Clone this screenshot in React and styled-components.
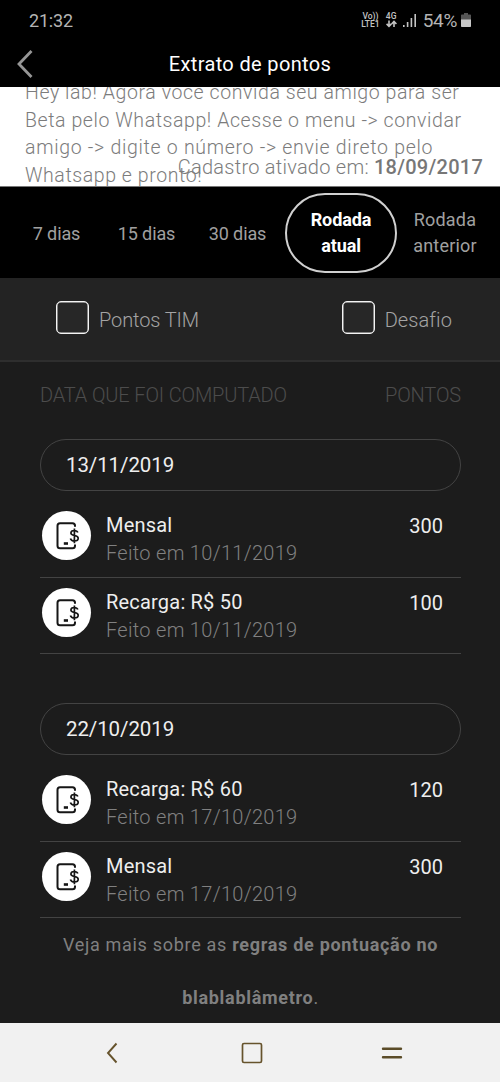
import React, { useState } from 'react'
import styled, { createGlobalStyle } from 'styled-components'

const periods = [
    { id: '7', lines: ['7 dias'], width: 85, spacing: -0.1 },
    { id: '15', lines: ['15 dias'], width: 95, spacing: -0.1 },
    { id: '30', lines: ['30 dias'], width: 87, spacing: -0.1 },
    { id: 'atual', lines: ['Rodada', 'atual'], width: 112, spacing: -0.1 },
    { id: 'anterior', lines: ['Rodada', 'anterior'], width: 96, spacing: 0.2 },
]

const groups = [
    {
        date: '13/11/2019',
        items: [
            { title: 'Mensal', done: '10/11/2019', points: 300 },
            { title: 'Recarga: R$ 50', done: '10/11/2019', points: 100 },
        ],
    },
    {
        date: '22/10/2019',
        items: [
            { title: 'Recarga: R$ 60', done: '17/10/2019', points: 120 },
            { title: 'Mensal', done: '17/10/2019', points: 300 },
        ],
    },
]

const notice = [
    'Hey lab! Agora você convida seu amigo para ser',
    'Beta pelo Whatsapp! Acesse o menu -> convidar',
    'amigo -> digite o número -> envie direto pelo',
    'Whatsapp e pronto!',
]

function StatusIcons() {
    return (
        <StatusRight>
            <TinyStack>
                <span>Vo))</span>
                <span>LTE1</span>
            </TinyStack>
            <TinyStack>
                <span>4G</span>
                <svg width="11" height="8" viewBox="0 0 11 8" fill="none" stroke="#c4c4c4" strokeWidth="1.6">
                    <path d="M3 .5v5.6M.6 3.900L3 6.400l2.400-2.500M8 7V1.700M5.600 4L8 1.500l2.400 2.500" />
                </svg>
            </TinyStack>
            <svg width="14" height="15" viewBox="0 0 14 15" fill="#c4c4c4">
                <rect x="0" y="12" width="1.6" height="2" />
                <rect x="3.8" y="9" width="1.6" height="5" />
                <rect x="7.6" y="5" width="1.6" height="9" />
                <rect x="11.4" y="1" width="1.6" height="13" />
            </svg>
            <Battery>54%</Battery>
            <svg width="10" height="16" viewBox="0 0 10 16">
                <path d="M3 1h4v1.500h2.200a.8.8 0 0 1 .8.800V8H0V3.300a.8.8 0 0 1 .8-.8H3z" fill="#555" />
                <path d="M0 7.500h10v6.700a.8.8 0 0 1-.8.800H.8a.8.8 0 0 1-.8-.8z" fill="#c8c8c8" />
            </svg>
        </StatusRight>
    )
}

function PhoneMoneyIcon() {
    return (
        <svg width="49" height="49" viewBox="0 0 49 49" fill="none" stroke="#161616" strokeWidth="2">
            <path d="M33 15.800v-1a2.500 2.500 0 0 0-2.500-2.500h-12.500a2.500 2.500 0 0 0-2.500 2.500v20a2.500 2.500 0 0 0 2.500 2.500h12.500a2.500 2.500 0 0 0 2.500-2.500V33.500" />
            <path d="M21.800 32.500h4.200" strokeWidth="2.600" />
            <path d="M35.800 21.600c-.5-1.500-1.700-2.100-3.500-2.100-2 0-3.400.9-3.400 2.500 0 3.600 7.300 1.400 7.300 5.200 0 1.700-1.600 2.700-3.800 2.700-2.100 0-3.500-.8-4-2.500M32.400 17.400v14.800" strokeWidth="1.700" />
        </svg>
    )
}

function Entry({ item }) {
    return (
        <EntryRow>
            <Badge><PhoneMoneyIcon /></Badge>
            <EntryText>
                <EntryTitle>{item.title}</EntryTitle>
                <EntryDate>Feito em {item.done}</EntryDate>
            </EntryText>
            <Points>{item.points}</Points>
        </EntryRow>
    )
}

function App() {
    const [period, setPeriod] = useState('atual')

    return (
        <Screen>
            <GlobalStyle />
            <StatusBar>
                <Clock>21:32</Clock>
                <StatusIcons />
            </StatusBar>
            <Header>
                <svg width="17" height="28" viewBox="0 0 17 28" fill="none" stroke="#969696" strokeWidth="2.800">
                    <path d="M15.500 1L3 14l12.500 13" />
                </svg>
                <Title>Extrato de pontos</Title>
            </Header>
            <Notice>
                {notice.map((line) => <NoticeLine key={line}>{line}</NoticeLine>)}
                <Activated>Cadastro ativado em: <b>18/09/2017</b></Activated>
            </Notice>
            <Tabs>
                {periods.map((p) => (
                    <Tab
                        key={p.id}
                        $width={p.width}
                        $spacing={p.spacing}
                        $active={p.id === period}
                        onClick={() => setPeriod(p.id)}
                    >
                        {p.lines.map((line) => <span key={line}>{line}</span>)}
                    </Tab>
                ))}
            </Tabs>
            <Filters>
                <Filter><Box /><span>Pontos TIM</span></Filter>
                <Filter><Box /><span>Desafio</span></Filter>
            </Filters>
            <Statement>
                <Columns>
                    <span>DATA QUE FOI COMPUTADO</span>
                    <span>PONTOS</span>
                </Columns>
                {groups.map((group) => (
                    <Group key={group.date}>
                        <DatePill>{group.date}</DatePill>
                        {group.items.map((item) => <Entry key={item.title} item={item} />)}
                    </Group>
                ))}
                <Rules>
                    <span>Veja mais sobre as <b>regras de pontuação no</b></span>
                    <span><b>blablablâmetro</b>.</span>
                </Rules>
            </Statement>
            <NavBar>
                <svg width="22" height="22" viewBox="0 0 22 22" fill="none" stroke="#66532c" strokeWidth="1.900">
                    <path d="M15.500 1.500L7 11l8.500 9.500" />
                </svg>
                <svg width="22" height="22" viewBox="0 0 22 22" fill="none" stroke="#66532c" strokeWidth="1.700">
                    <rect x="1.500" y="1.500" width="19" height="19" rx="1.500" />
                </svg>
                <svg width="22" height="22" viewBox="0 0 22 22" fill="none" stroke="#5b4c28" strokeWidth="2.400" strokeLinecap="round">
                    <path d="M2 6.800h18M2 15.300h18" />
                </svg>
            </NavBar>
        </Screen>
    )
}

export default App

const GlobalStyle = createGlobalStyle`
    body {
        margin: 0;
        background: #1c1c1c;
    }
    * {
        box-sizing: border-box;
    }
    svg {
        display: block;
        flex-shrink: 0;
    }
`

const Screen = styled.div`
    display: flex;
    flex-direction: column;
    width: 500px;
    height: 1082px;
    overflow: hidden;
    background: #1c1c1c;
    font-family: Roboto, "Liberation Sans", sans-serif;
    font-weight: 300;
    white-space: nowrap;
`

const StatusBar = styled.div`
    display: flex;
    justify-content: space-between;
    align-items: center;
    height: 40px;
    padding: 0 29px;
    background: #000;
    color: #b4b4b4;
`

const Clock = styled.span`
    font-size: 18px;
    font-weight: 400;
    letter-spacing: -0.2px;
`

const StatusRight = styled.div`
    display: flex;
    align-items: center;
`

const TinyStack = styled.div`
    display: flex;
    flex-direction: column;
    align-items: center;
    margin-right: 6px;
    font-size: 8.500px;
    font-weight: 500;
    line-height: 8px;
    color: #c4c4c4;
`

const Battery = styled.span`
    margin: 0 4px 0 6px;
    font-size: 19px;
    font-weight: 400;
    letter-spacing: -0.3px;
`

const Header = styled.header`
    display: flex;
    align-items: center;
    height: 47px;
    padding: 0 16px;
    background: #000;
`

const Title = styled.h1`
    flex: 1;
    margin: 0 17px 0 0;
    text-align: center;
    color: #fff;
    font-size: 20px;
    font-weight: 400;
    letter-spacing: 0.35px;
`

const Notice = styled.section`
    position: relative;
    height: 100px;
    padding: 0 25px;
    overflow: hidden;
    background: #fff;
    border-bottom: 1px solid #777;
    color: #7c7c7c;
`

const NoticeLine = styled.p`
    margin: 0;
    font-size: 19.500px;
    line-height: 27.700px;
    letter-spacing: 0.58px;

    &:first-child {
        margin-top: -8.200px;
    }

    &:nth-child(3) {
        letter-spacing: 0.7px;
    }
`

/* floats over the last line of the notice */
const Activated = styled.div`
    position: absolute;
    right: 17px;
    bottom: 5px;
    font-size: 20px;
    line-height: 28px;
    letter-spacing: 0.25px;

    b {
        font-weight: 500;
        color: #777;
    }
`

const Tabs = styled.nav`
    display: flex;
    align-items: center;
    height: 91px;
    padding: 0 7px 0 14px;
    background: #000;
`

const Tab = styled.button`
    display: flex;
    flex-direction: column;
    align-items: center;
    justify-content: center;
    flex-shrink: 0;
    width: ${({ $width }) => $width}px;
    height: 80px;
    padding: 3px 0 0;
    border: ${({ $active }) => ($active ? '2px solid #d0d0d0' : 'none')};
    border-radius: 40px;
    background: none;
    color: ${({ $active }) => ($active ? '#fff' : '#a0a0a0')};
    font-family: inherit;
    font-size: 18px;
    font-weight: ${({ $active }) => ($active ? 700 : 400)};
    line-height: 26.500px;
    letter-spacing: ${({ $spacing }) => $spacing}px;

    &:nth-child(n + 4) {
        padding: 1px 0 0;
    }

    &:nth-child(4) {
        margin-left: 4px;
    }
`

const Filters = styled.div`
    display: flex;
    justify-content: space-between;
    align-items: center;
    height: 84px;
    padding: 0 48px 3px 56px;
    background: #232323;
    border-bottom: 2px solid #2e2e2e;
`

const Filter = styled.label`
    display: flex;
    align-items: center;
    gap: 10px;
    color: #a4a4a4;
    font-size: 20px;
    letter-spacing: -0.1px;

    span {
        padding-top: 5px;
    }

    & + & {
        letter-spacing: 0.1px;
    }
`

const Box = styled.i`
    width: 33px;
    height: 33px;
    border: 1px solid #f4f4f4;
    border-radius: 5px;
    background: #272727;
    box-shadow: inset 0 0 0 0.500px #e4e4e4;
`

const Statement = styled.main`
    flex: 1;
    min-height: 0;
    padding: 0 39px 0 40px;
`

const Columns = styled.div`
    display: flex;
    justify-content: space-between;
    height: 77px;
    padding-top: 19px;
    color: #4c4c4c;
    font-size: 20px;
    line-height: 28px;
    letter-spacing: -0.150px;
`

const Group = styled.section`
    margin-bottom: 49px;

    & + & {
        margin-bottom: 0;
    }
`

const DatePill = styled.div`
    display: flex;
    align-items: center;
    height: 52px;
    margin-bottom: 10px;
    padding-left: 25px;
    border: 1px solid #434343;
    border-radius: 26px;
    color: #eee;
    font-size: 20.500px;
    font-weight: 400;
    letter-spacing: -0.100px;
`

const EntryRow = styled.div`
    display: flex;
    height: 76.500px;
    padding: 10px 18px 0 2px;
    border-bottom: 1px solid #434343;
`

const Badge = styled.div`
    width: 49px;
    height: 49px;
    border-radius: 50%;
    background: #fff;
`

const EntryText = styled.div`
    flex: 1;
    padding-left: 15px;
    line-height: 28px;
`

const EntryTitle = styled.div`
    color: #eee;
    font-size: 20px;
    font-weight: 400;
    letter-spacing: 0.200px;
`

const EntryDate = styled.div`
    color: #808080;
    font-size: 20px;
    letter-spacing: 0.300px;
`

const Points = styled.div`
    padding-top: 1px;
    color: #eee;
    font-size: 20px;
    font-weight: 400;
    line-height: 28px;
`

const Rules = styled.div`
    display: flex;
    flex-direction: column;
    align-items: center;
    color: #808080;
    font-size: 18px;
    font-weight: 400;
    line-height: 53px;
    letter-spacing: 0.700px;

    b {
        font-weight: 700;
    }
`

const NavBar = styled.footer`
    display: flex;
    justify-content: space-between;
    align-items: center;
    position: relative;
    flex-shrink: 0;
    height: 59px;
    padding: 0 97px 0 101px;
    background: #f1f1f1;
`
